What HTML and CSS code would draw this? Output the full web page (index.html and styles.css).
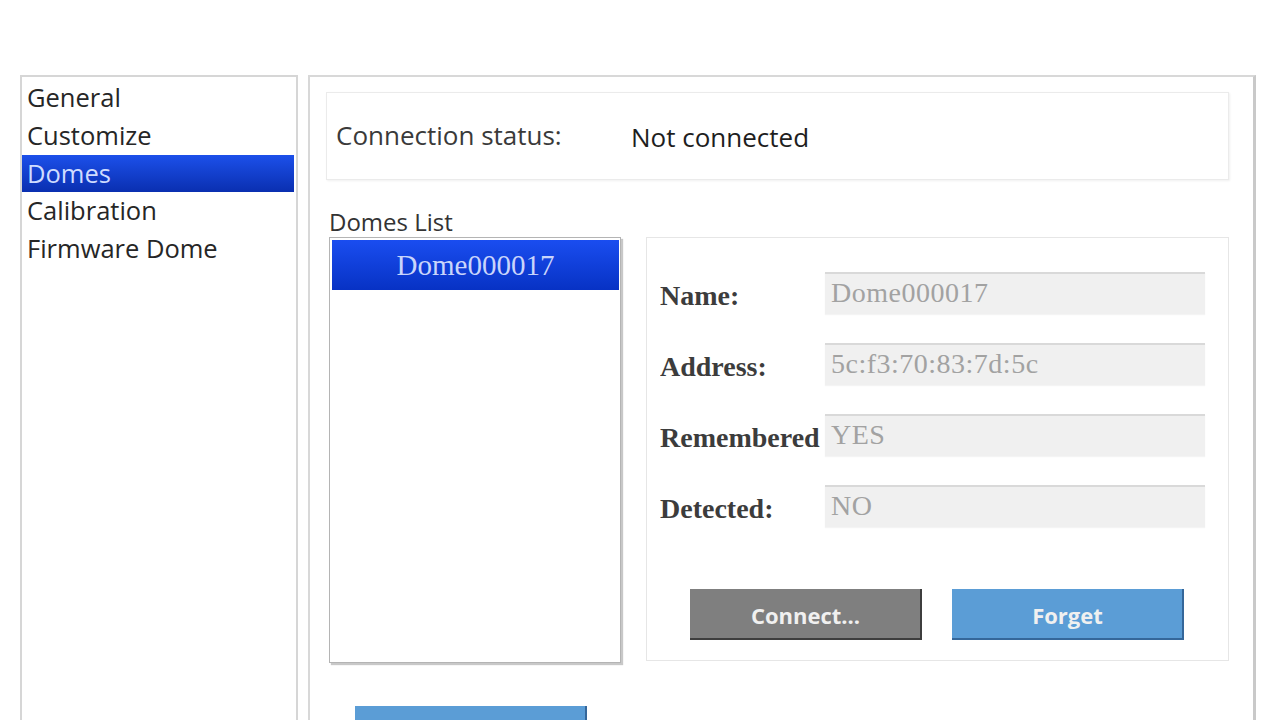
FILE: index.html
```html
<!DOCTYPE html>
<html lang="en">
<head>
    <meta charset="UTF-8">
    <meta name="viewport" content="width=device-width, initial-scale=1.0">
    <title>Settings</title>
    <link rel="stylesheet" href="styles.css">
</head>
<body>
    <div class="janela">
        <!-- menu da esquerda -->
        <ul class="menu">
            <li>General</li>
            <li>Customize</li>
            <li class="ativo">Domes</li>
            <li>Calibration</li>
            <li>Firmware Dome</li>
        </ul>

        <div class="painel">
            <div class="status">
                <span class="status-rotulo">Connection status:</span>
                <span class="status-valor">Not connected</span>
            </div>

            <div class="domos">
                <div class="coluna-lista">
                    <p class="titulo-lista">Domes List</p>
                    <ul class="lista">
                        <li class="selecionado">Dome000017</li>
                    </ul>
                </div>

                <div class="detalhes">
                    <div class="linha">
                        <label>Name:</label>
                        <div class="campo">Dome000017</div>
                    </div>
                    <div class="linha">
                        <label>Address:</label>
                        <div class="campo">5c:f3:70:83:7d:5c</div>
                    </div>
                    <div class="linha">
                        <label>Remembered</label>
                        <div class="campo">YES</div>
                    </div>
                    <div class="linha">
                        <label>Detected:</label>
                        <div class="campo">NO</div>
                    </div>
                    <div class="botoes">
                        <button class="botao cinza">Connect...</button>
                        <button class="botao azul">Forget</button>
                    </div>
                </div>
            </div>

            <!-- botao de baixo, so aparece a parte de cima -->
            <div class="rodape">
                <button class="botao azul"></button>
            </div>
        </div>
    </div>
</body>
</html>
```

FILE: styles.css
```css
*{
    margin: 0;
    padding: 0;
    box-sizing: border-box;
}
body{
    background-color: white;
    font-family: "Open Sans", "Noto Sans", sans-serif;
    color: #333;
    overflow: hidden;
}
.janela{
    display: flex;
    gap: 10px;
    padding: 75px 0 0 20px;
    height: 720px;
}

/* menu da esquerda */
.menu{
    list-style: none;
    width: 278px;
    border: 2px solid #d6d6d6;
    border-bottom: none;
    padding: 2px 2px 0 0;
}
.menu li{
    height: 38px;
    line-height: 37px;
    font-size: 25.5px;
    padding-left: 5px;
    color: #262626;
}
.menu li.ativo{
    background-image: linear-gradient(#1c50ea, #0a2fb0);
    color: #cfdcff;
    height: 37px;
}

/* painel da direita */
.painel{
    width: 948px;
    border: 2px solid #d8d8d8;
    border-right: 3px solid #c9c9c9;
    border-bottom: none;
    padding: 15px 24px 0 16px;
}
.status{
    display: flex;
    align-items: center;
    height: 88px;
    border: 1px solid #ebebeb;
    box-shadow: 1px 1px 2px #f0f0f0;
    padding: 0 0 2px 9px;
    font-size: 26px;
}
.status-rotulo{
    width: 295px;
    color: #3a3a3a;
}
.status-valor{
    color: #1e1e1e;
    padding-top: 4px;
}

.domos{
    display: flex;
    gap: 25px;
    margin-top: 27px;
}
.coluna-lista{
    display: flex;
    flex-direction: column;
}
.titulo-lista{
    font-size: 24px;
    line-height: 29px;
    padding-left: 3px;
    color: #333;
    margin-bottom: 1px;
}
.lista{
    list-style: none;
    width: 292px;
    height: 426px;
    margin-left: 3px;
    border: 1px solid #b4b4b4;
    box-shadow: 2px 2px 1px #c8c8c8;
    padding: 2px 1px 0 2px;
}
.lista li.selecionado{
    height: 50px;
    line-height: 50px;
    text-align: center;
    font-family: "Liberation Serif", serif;
    font-size: 29px;
    color: #c9d5fb;
    background-image: linear-gradient(#1a4df0, #0732c4);
}

/* caixa de detalhes */
.detalhes{
    width: 584px;
    height: 424px;
    margin-top: 30px;
    border: 1px solid #e6e6e6;
    padding: 34px 23px 0 13px;
}
.linha{
    display: flex;
    align-items: center;
    height: 42px;
    margin-bottom: 29px;
}
.linha label{
    width: 165px;
    flex-shrink: 0;
    font-family: "Liberation Serif", serif;
    font-weight: bold;
    font-size: 28px;
    color: #3c3c3c;
    white-space: nowrap;
    overflow: hidden;
    padding-top: 6px;
}
.campo{
    flex: 1;
    height: 42px;
    line-height: 38px;
    background-color: #f0f0f0;
    border-top: 2px solid #d9d9d9;
    box-shadow: 0 1px 1px #f4f4f4;
    padding-left: 6px;
    font-family: "Liberation Serif", serif;
    font-size: 28px;
    letter-spacing: 0.5px;
    color: #a2a2a2;
}
.botoes{
    display: flex;
    justify-content: center;
    gap: 30px;
    margin-top: 62px;
    padding-left: 8px;
}
.botao{
    width: 232px;
    height: 51px;
    border: none;
    font-family: "Open Sans", "Noto Sans", sans-serif;
    font-weight: bold;
    font-size: 22px;
    color: #f0f0f0;
}
.cinza{
    background-color: #7f7f7f;
    box-shadow: inset -2px -2px 0 #3e3e3e;
}
.azul{
    background-color: #5b9dd6;
    box-shadow: inset -2px -2px 0 #35679a;
}

.rodape{
    padding: 43px 0 0 29px;
}
```
